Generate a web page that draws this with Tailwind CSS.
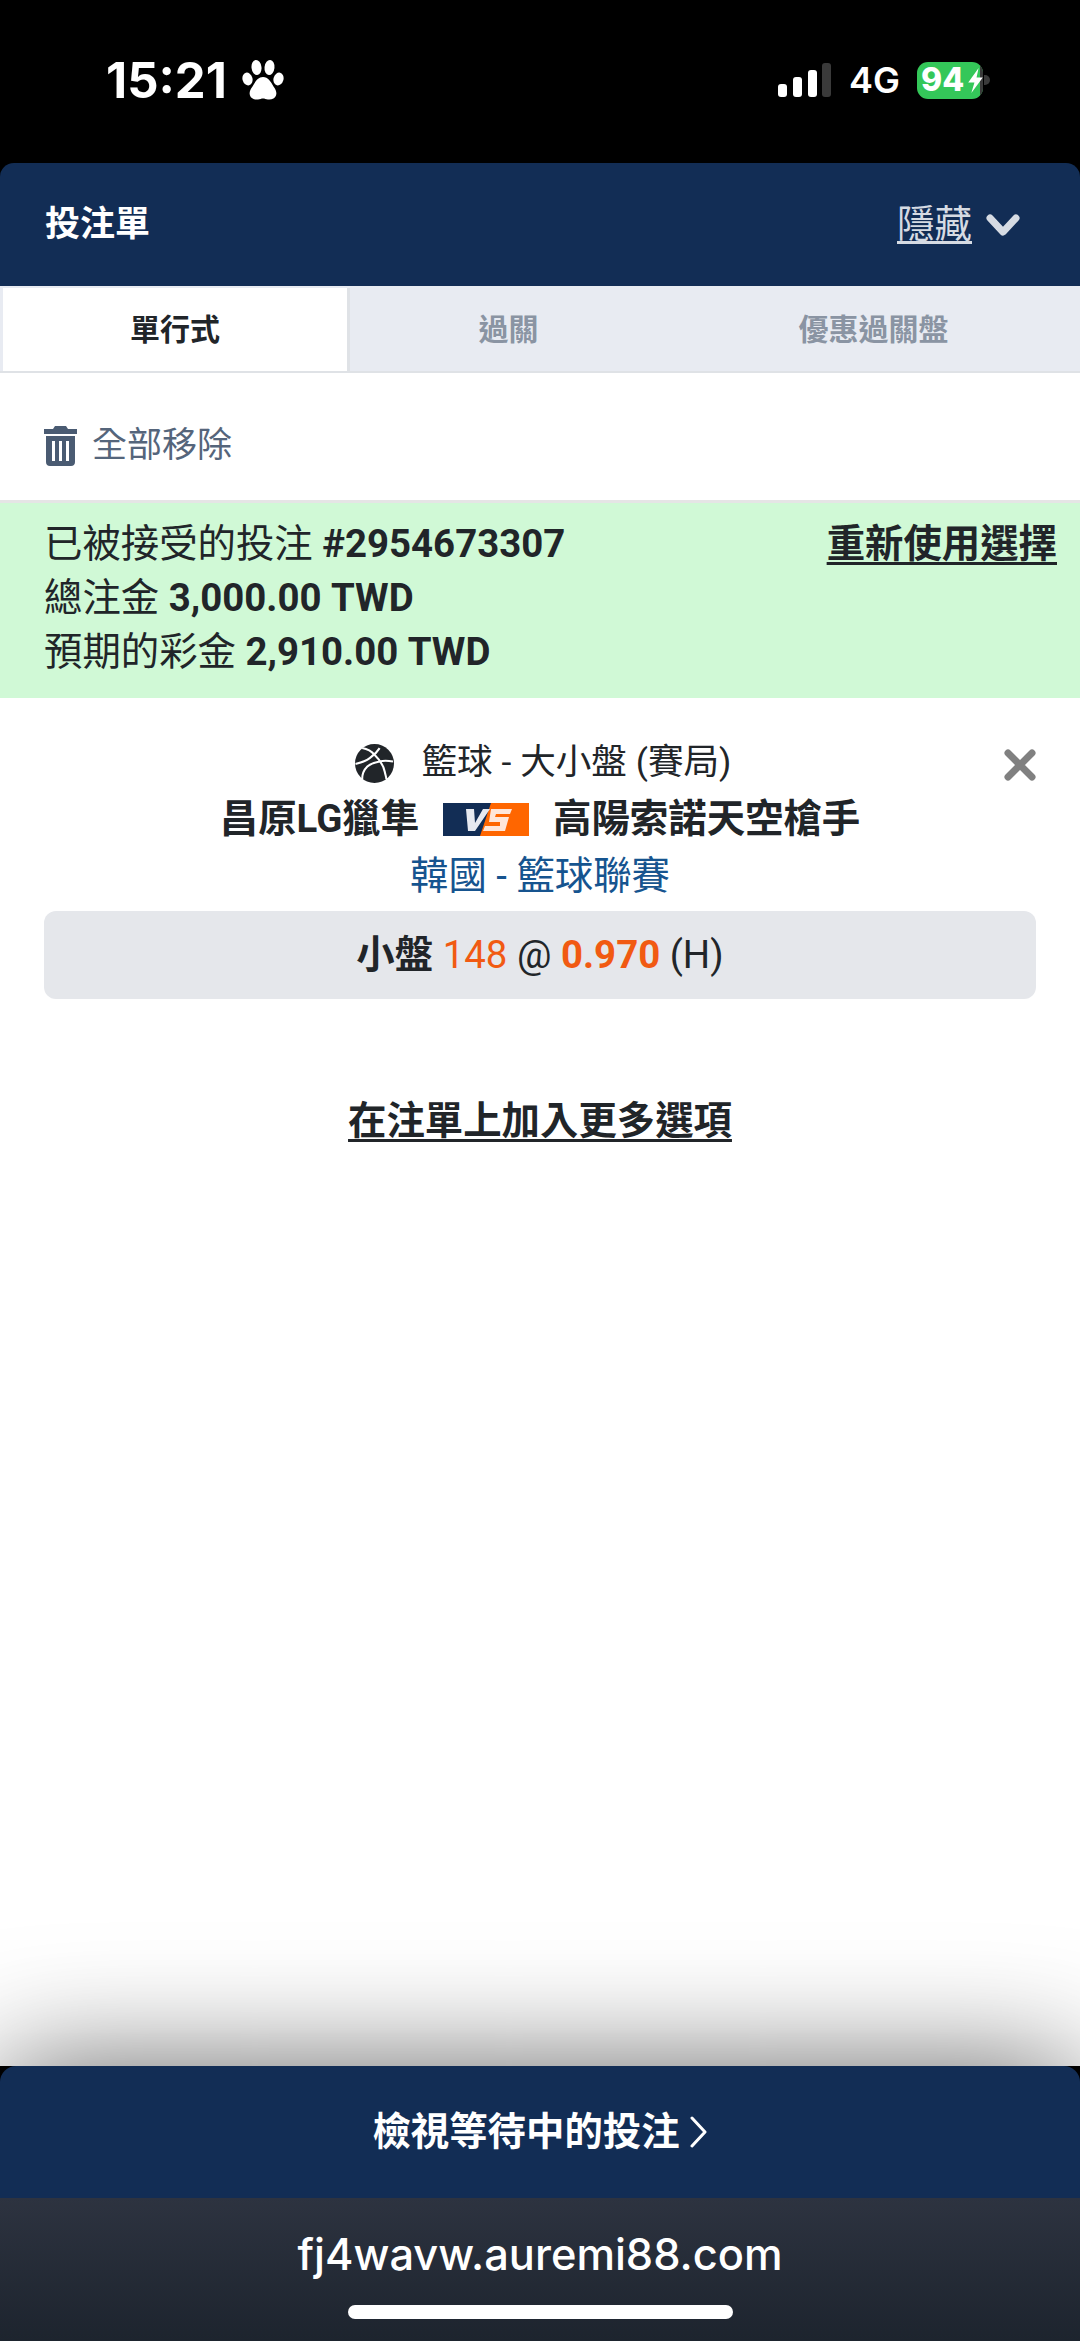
<!DOCTYPE html>
<html lang="zh-Hant">
<head>
<meta charset="utf-8">
<title>投注單</title>
<script src="https://cdn.jsdelivr.net/npm/@tailwindcss/browser@4"></script>
</head>
<body class="m-0 bg-black">
<div class="flex h-[2341px] w-[1080px] flex-col overflow-hidden bg-black font-['Roboto','Noto_Sans_CJK_TC',sans-serif] text-[#212529]">
  <!-- status bar -->
  <div class="flex h-[163px] shrink-0 items-start justify-between bg-black pl-[106px] pr-[90px] pt-[56px] text-white">
    <div class="flex h-[48px] items-center gap-[15px]">
      <span class="font-['Inter',sans-serif] text-[49px] leading-none font-bold">15:21</span>
      <svg class="h-[42px] w-[42px]" viewBox="0 0 42 42" fill="#fff">
        <ellipse cx="5.5" cy="20" rx="5" ry="6.5" transform="rotate(-15 5.500 20)"/>
        <ellipse cx="14.500" cy="8.500" rx="5" ry="7.500" transform="rotate(-6 14.500 8.500)"/>
        <ellipse cx="27.500" cy="8.500" rx="5" ry="7.500" transform="rotate(6 27.500 8.500)"/>
        <ellipse cx="36.500" cy="20" rx="5" ry="6.500" transform="rotate(15 36.500 20)"/>
        <path d="M21 18c-5 0-8 5-10.500 9.500C8 31 7 33.500 8 36.500c1 3 4.500 4.500 8 4 2-.3 3.500-1 5-1s3 .7 5 1c3.500.5 7-1 8-4 1-3 0-5.500-2.500-9C29 23 26 18 21 18z"/>
      </svg>
    </div>
    <div class="flex h-[48px] items-center">
      <svg class="h-[34px] w-[53px]" viewBox="0 0 53 34">
        <rect x="0" y="21" width="9" height="13" rx="3" fill="#fff"/>
        <rect x="15" y="14" width="9" height="20" rx="3" fill="#fff"/>
        <rect x="30" y="7" width="9" height="27" rx="3" fill="#fff"/>
        <rect x="44" y="0" width="9" height="34" rx="3" fill="#3a3a3a"/>
      </svg>
      <span class="ml-[18px] font-['Inter',sans-serif] text-[36px] leading-none font-semibold">4G</span>
      <div class="relative ml-[17px] flex h-[37px] w-[66px] items-center overflow-hidden rounded-[11px] bg-[#34c759] pl-[4px] font-['Inter',sans-serif] text-[32px] leading-none font-extrabold">
        <span>94</span>
        <span class="absolute right-0 top-0 h-full w-[3px] bg-[#3a3a3a]"></span>
        <svg class="absolute left-[51px] top-[6px] h-[25px] w-[15px]" viewBox="0 0 14 24" fill="#fff"><path d="M10 0 0 14h6L3 24l11-15H8z"/></svg>
      </div>
      <span class="ml-[1px] h-[10px] w-[6px] rounded-r-full bg-[#3a3a3a]"></span>
    </div>
  </div>

  <!-- header -->
  <div class="flex h-[123px] shrink-0 items-center justify-between rounded-t-[14px] bg-[#122d55] pl-[45px] pr-[60px] text-white">
    <span class="text-[35px] leading-none font-bold">投注單</span>
    <div class="flex items-center gap-[14px] text-[#d6dbe3]">
      <span class="text-[37.5px] leading-none underline underline-offset-[4px]">隱藏</span>
      <svg class="h-[24px] w-[34px]" viewBox="0 0 34 24" fill="none" stroke="#d6dbe3" stroke-width="7" stroke-linecap="round" stroke-linejoin="round"><path d="M4 5l13 14L30 5"/></svg>
    </div>
  </div>

  <!-- tabs -->
  <div class="flex h-[87px] shrink-0 bg-[#e8ebf2] shadow-[inset_0_-2px_0_#dfe2e6] pt-[2px] pb-[2px] text-[30px] leading-none font-bold">
    <div class="ml-[3px] flex w-[344px] items-center justify-center bg-white">單行式</div>
    <div class="flex w-[3px] bg-[#dfe2e6]"></div>
    <div class="flex w-[317px] items-center justify-center text-[#8a94a3]">過關</div>
    <div class="flex flex-1 items-center justify-center text-[#8a94a3]">優惠過關盤</div>
  </div>

  <!-- body -->
  <div class="flex flex-1 flex-col bg-white">
    <div class="flex h-[127px] shrink-0 items-center gap-[15px] pl-[44px] pt-[18px] text-[#55657b]">
      <svg class="h-[40px] w-[33px]" viewBox="0 0 33 40" fill="#4a5b72">
        <path d="M11 0h11l2 3h9v5H0V3h9z"/>
        <path fill-rule="evenodd" d="M2 10h29v26c0 2.500-1.500 4-4 4H6c-2.500 0-4-1.500-4-4zM8 15v20h3V15zM15 15v20h3V15zM22 15v20h3V15z"/>
      </svg>
      <span class="text-[35px] leading-none">全部移除</span>
    </div>
    <div class="flex h-[198px] shrink-0 justify-between border-t-[3px] border-[#e5e5e5] bg-[#d0f9d6] pl-[44px] pr-[23px] pt-[14px] text-[38.4px] leading-[54px]">
      <div>
        <p>已被接受的投注 <b>#2954673307</b></p>
        <p>總注金 <b>3,000.00 TWD</b></p>
        <p>預期的彩金 <b>2,910.00 TWD</b></p>
      </div>
      <b class="underline underline-offset-[5px]">重新使用選擇</b>
    </div>

    <div class="relative flex flex-col items-center px-[44px] pt-[37px]">
      <svg class="absolute right-[44px] top-[51px] h-[32px] w-[32px]" viewBox="0 0 32 32" fill="none" stroke="#808080" stroke-width="7" stroke-linecap="round"><path d="M4 4l24 24M28 4 4 28"/></svg>
      <div class="flex h-[56px] items-center gap-[28px] pl-[6px] text-[35.6px] leading-none">
        <svg class="h-[39px] w-[39px]" viewBox="0 0 38 38">
          <circle cx="19" cy="19" r="19" fill="#212529"/>
          <g fill="none" stroke="#fff" stroke-width="2">
            <path d="M24 4C21 9 18 11 14 14 10 17 6 18 .5 19.500"/>
            <path d="M7 4c5 1 9 3 12 6.500 5 5 9 11 10 16.500.5 3 1.500 5 1.500 7"/>
            <path d="M37 17c-5-.8-9-1-13 0-5 1-9 2-12 5-3 3-5 7-5 12"/>
          </g>
        </svg>
        <span>籃球 - 大小盤 (賽局)</span>
      </div>
      <div class="flex h-[56px] items-center gap-[24px] text-[38.4px] leading-none font-bold">
        <span>昌原LG獵隼</span>
        <svg class="h-[33px] w-[86px]" viewBox="0 0 86 33">
          <rect width="86" height="33" fill="#ff6600"/>
          <path d="M0 0h48L37 33H0z" fill="#122d55"/>
          <path d="M23 6h8l1 14 8-14h7L32 28h-7z" fill="#e6e9f0"/>
          <path d="M48 6h21l-2 5H53l-1 3h14l-4 14H40l2-5h15v-4H46z" fill="#ffe6d8"/>
        </svg>
        <span>高陽索諾天空槍手</span>
      </div>
      <div class="flex h-[58px] items-center text-[38.4px] leading-none text-[#16548f]">韓國 - 籃球聯賽</div>
      <div class="mt-[6px] flex h-[88px] w-full items-center justify-center rounded-[12px] bg-[#e5e7eb] text-[38.4px] leading-none">
        <span><b>小盤</b> <span class="text-[#f15a12]">148</span> @ <b class="text-[#f15a12]">0.970</b> (H)</span>
      </div>
      <div class="mt-[103px] text-[38.4px] leading-none font-bold underline underline-offset-[5px]">在注單上加入更多選項</div>
    </div>
  </div>

  <!-- footer -->
  <div class="z-10 flex h-[132px] shrink-0 items-center justify-center gap-[8px] rounded-t-[16px] bg-[#122d55] text-white shadow-[0_0_120px_rgba(0,0,0,0.6)]">
    <span class="text-[38.4px] leading-none font-bold">檢視等待中的投注</span>
    <svg class="h-[32px] w-[20px]" viewBox="0 0 20 32" fill="none" stroke="#fff" stroke-width="3" stroke-linecap="round" stroke-linejoin="round"><path d="M4 2l13 14L4 30"/></svg>
  </div>

  <!-- browser bar -->
  <div class="z-10 flex h-[143px] shrink-0 flex-col items-center bg-gradient-to-b from-[#2d3340] to-[#1d242e] pt-[31px] text-white">
    <span class="font-['Inter',sans-serif] text-[43.4px] leading-[50px] font-medium">fj4wavw.auremi88.com</span>
    <span class="mt-[26px] h-[14px] w-[385px] rounded-full bg-white"></span>
  </div>
</div>
</body>
</html>
